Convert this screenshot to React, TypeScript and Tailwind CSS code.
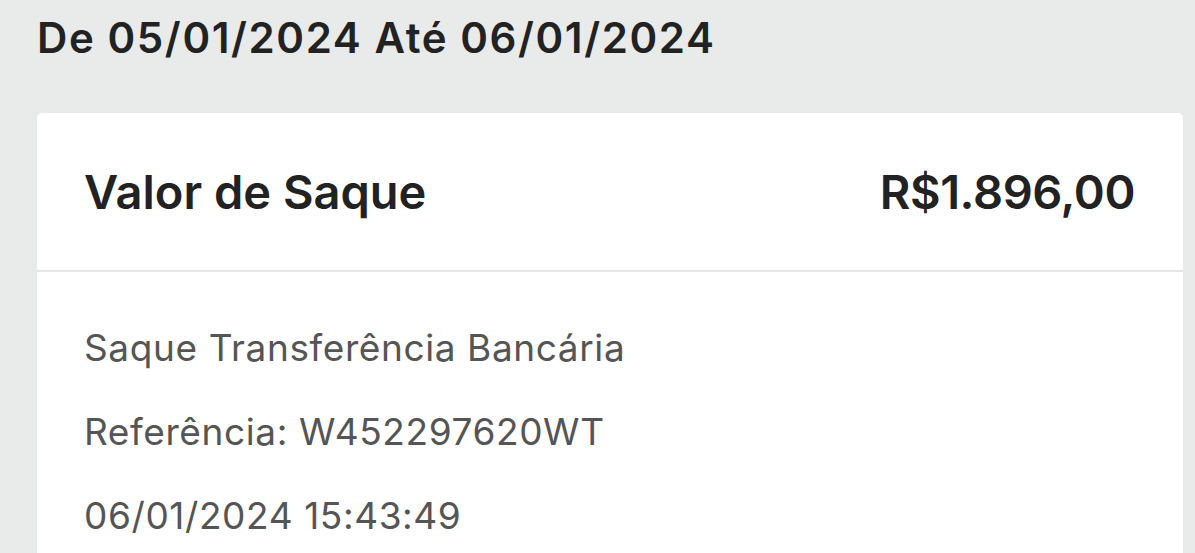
import React from 'react';

const linhas = [
  'Saque Transferência Bancária',
  'Referência: W452297620WT',
  '06/01/2024 15:43:49',
];

const App: React.FC = () => {
  return (
    <div className="h-[553px] w-[1195px] overflow-hidden bg-[#e9ebea] pl-[37px] pr-[12px] font-['Inter',sans-serif]">
      <div className="flex h-[76px] items-center">
        <h1 className="text-[42px] leading-none font-semibold tracking-[1.6px] text-[#222222]">De 05/01/2024 Até 06/01/2024</h1>
      </div>

      <div className="mt-[37px] rounded-t-[5px] bg-white">
        <div className="flex h-[159px] items-center justify-between border-b-2 border-[#e4e5e5] pl-[47px] pr-[48px]">
          <span className="text-[47px] leading-none font-semibold text-[#222222]">Valor de Saque</span>
          <span className="text-[47px] leading-none font-semibold tracking-[-0.4px] text-[#222222]">R$1.896,00</span>
        </div>

        <div className="flex flex-col pt-[33px] pl-[47px]">
          {linhas.map((linha) => (
            <div key={linha} className="flex h-[84px] items-center">
              <span className="text-[37px] leading-none tracking-[0.6px] text-[#555555]">{linha}</span>
            </div>
          ))}
        </div>
      </div>
    </div>
  );
};

export default App;
